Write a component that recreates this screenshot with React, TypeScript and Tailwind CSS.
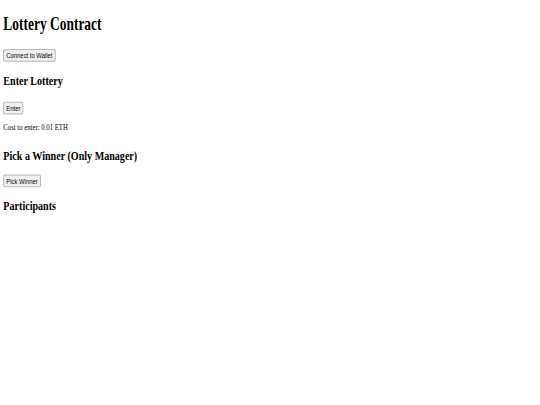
export default function App() {
  const btn =
    "block h-[22px] px-[6px] border border-[#767676] rounded-[3px] bg-[#efefef] text-[14px] leading-none text-black font-['Liberation_Sans',Arial,sans-serif]";

  return (
    <div className="h-screen w-full overflow-hidden bg-white">
      <div className="origin-top-left scale-x-[0.42] scale-y-[0.56] pl-2 pt-[25.5px] text-black font-['Liberation_Serif','Times_New_Roman',serif]">
        <h1 className="text-[32px] font-bold leading-none">Lottery Contract</h1>
        <button className={`${btn} mt-[30px]`}>Connect to Wallet</button>

        <h2 className="mt-[22.2px] text-[24px] font-bold leading-none">Enter Lottery</h2>
        <button className={`${btn} mt-[26.4px]`}>Enter</button>
        <p className="mt-[16.4px] text-[16px] leading-none">Cost to enter: 0.01 ETH</p>

        <h2 className="mt-[28.6px] text-[24px] font-bold leading-none">Pick a Winner (Only Manager)</h2>
        <button className={`${btn} mt-[23.4px]`}>Pick Winner</button>

        <h2 className="mt-[20.4px] text-[24px] font-bold leading-none">Participants</h2>
        <ul className="mt-4"></ul>
      </div>
    </div>
  );
}
